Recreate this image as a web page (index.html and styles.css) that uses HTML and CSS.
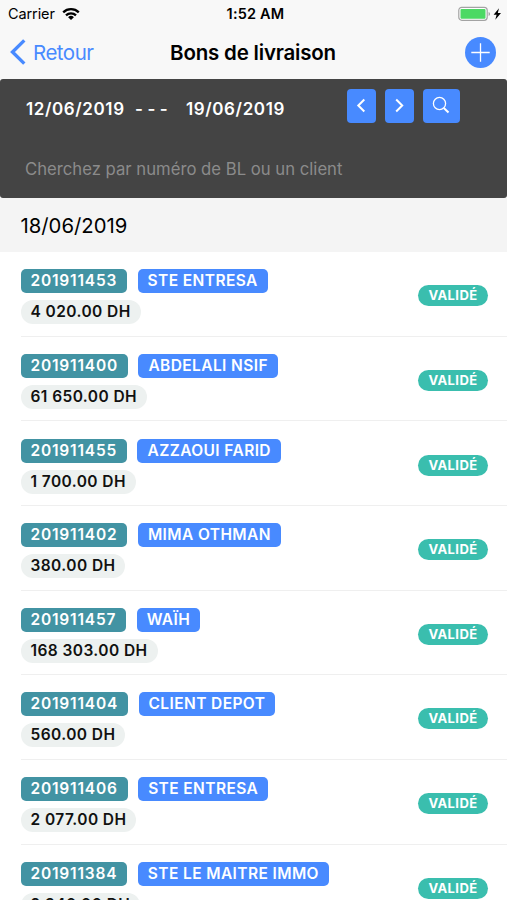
FILE: index.html
```html
<!DOCTYPE html>
<html lang="fr">
  <head>
    <meta charset="utf-8">
    <title>Bons de livraison</title>
    <link rel="stylesheet" href="styles.css">
  </head>
  <body>
    <header class="top">
      <div class="status">
        <div class="carrier">
          <span>Carrier</span>
          <svg width="18" height="14" viewBox="0 0 18 14" fill="none" stroke="#000" stroke-width="2.3">
            <path d="M1.2 5.3a11.2 11.2 0 0 1 15.6 0M4 8.3a7.2 7.2 0 0 1 10 0"/>
            <path d="M9 13L6.1 10.2a4.1 4.1 0 0 1 5.8 0z" fill="#000" stroke="none"/>
          </svg>
        </div>
        <div class="time">1:52 AM</div>
        <div class="battery">
          <svg width="45" height="16" viewBox="0 0 45 16">
            <rect x=".8" y="1.3" width="28.4" height="13" rx="3" fill="#fff" stroke="#a3a3a3" stroke-width="1.2"/>
            <rect x="2.5" y="2.9" width="25" height="9.8" rx="1" fill="#4cd964"/>
            <path d="M30.6 6v4q1.5-.6 1.5-2t-1.5-2z" fill="#a3a3a3"/>
            <path d="M41 2.3l-5.4 6.5h3l-1.3 5 5.7-6.7h-3.2z" fill="#000"/>
          </svg>
        </div>
      </div>
      <nav class="navbar">
        <a class="back">
          <svg width="16" height="26" viewBox="0 0 16 26" fill="none" stroke="#488aff" stroke-width="3.4"><path d="M14.3 1.4L2.5 13l11.8 11.6"/></svg>
          <span>Retour</span>
        </a>
        <h1>Bons de livraison</h1>
        <a class="add">
          <svg width="31" height="31" viewBox="0 0 31 31"><circle cx="15.5" cy="15.5" r="15.5" fill="#488aff"/><path d="M6.3 15.5h18.4M15.5 6.3v18.4" stroke="#fff" stroke-width="1.3"/></svg>
        </a>
      </nav>
    </header>
    <section class="filter">
      <div class="dates">
        <span class="from">12/06/2019</span>
        <span class="dash">- - -</span>
        <span class="to">19/06/2019</span>
        <button class="btn"><svg width="29" height="34" viewBox="0 0 29 34"><path d="M17.3 10.5l-6 6 6 6"/></svg></button>
        <button class="btn"><svg width="29" height="34" viewBox="0 0 29 34"><path d="M11.2 10.5l6 6-6 6"/></svg></button>
        <button class="btn wide"><svg width="37" height="34" viewBox="0 0 37 34"><circle cx="16.5" cy="14.5" r="6.1" stroke-width="1.3"/><path d="M20.8 19l4.7 4.5"/></svg></button>
      </div>
      <div class="search">Cherchez par numéro de BL ou un client</div>
    </section>
    <h2 class="day">18/06/2019</h2>
    <ul class="list">
      <li>
        <div class="info"><div class="line"><b class="num">201911453</b><b class="client">STE ENTRESA</b></div><b class="amount">4 020.00 DH</b></div>
        <b class="state">VALIDÉ</b>
      </li>
      <li>
        <div class="info"><div class="line"><b class="num">201911400</b><b class="client">ABDELALI NSIF</b></div><b class="amount">61 650.00 DH</b></div>
        <b class="state">VALIDÉ</b>
      </li>
      <li>
        <div class="info"><div class="line"><b class="num">201911455</b><b class="client">AZZAOUI FARID</b></div><b class="amount">1 700.00 DH</b></div>
        <b class="state">VALIDÉ</b>
      </li>
      <li>
        <div class="info"><div class="line"><b class="num">201911402</b><b class="client">MIMA OTHMAN</b></div><b class="amount">380.00 DH</b></div>
        <b class="state">VALIDÉ</b>
      </li>
      <li>
        <div class="info"><div class="line"><b class="num">201911457</b><b class="client">WAÏH</b></div><b class="amount">168 303.00 DH</b></div>
        <b class="state">VALIDÉ</b>
      </li>
      <li>
        <div class="info"><div class="line"><b class="num">201911404</b><b class="client">CLIENT DEPOT</b></div><b class="amount">560.00 DH</b></div>
        <b class="state">VALIDÉ</b>
      </li>
      <li>
        <div class="info"><div class="line"><b class="num">201911406</b><b class="client">STE ENTRESA</b></div><b class="amount">2 077.00 DH</b></div>
        <b class="state">VALIDÉ</b>
      </li>
      <li>
        <div class="info"><div class="line"><b class="num">201911384</b><b class="client">STE LE MAITRE IMMO</b></div><b class="amount">2 340.00 DH</b></div>
        <b class="state">VALIDÉ</b>
      </li>
    </ul>
  </body>
</html>
```
FILE: styles.css
```css
*{box-sizing:border-box}
body{margin:0;height:900px;overflow:hidden;background:#fff;color:#000;font-family:Inter,"Liberation Sans",sans-serif}
svg{display:block}
.top{height:79px;background:#f8f8f8}
.status{display:grid;grid-template-columns:1fr auto 1fr;align-items:center;height:27px;padding:0 4px 0 8px;font-size:14.5px}
.carrier{display:flex;align-items:center;gap:7px;letter-spacing:-.1px}
.time{font-weight:600;letter-spacing:.2px}
.battery{justify-self:end}
.navbar{display:grid;grid-template-columns:1fr auto 1fr;align-items:center;height:50px;padding:0 11px 0 10px}
.back{display:flex;align-items:center;gap:7px;color:#488aff;font-size:20.5px;letter-spacing:-.5px}
h1{margin:0;font-size:20.5px;font-weight:600;letter-spacing:-.2px}
.add{justify-self:end}
.filter{height:119px;padding:10px 26px 0;background:#444;border-radius:3px;color:#fff}
.dates{display:flex;align-items:center;height:34px;font-size:17px;font-weight:600}
.dates span{padding-top:5px;letter-spacing:.6px}
.from{width:109px}
.dates .dash{width:51px;letter-spacing:.1px}
.to{width:161px}
.btn{width:29px;height:34px;margin:0 9px 0 0;padding:0;border:0;border-radius:4px;background:#488aff}
.btn.wide{width:37px}
.btn svg{fill:none;stroke:#fff;stroke-width:2}
.search{margin:35px 0 0 -1px;font-size:16.7px;line-height:22px;color:#8b8b8b}
.day{height:54px;margin:0;padding-left:20.5px;background:#f4f4f4;font-size:20.3px;line-height:55px;font-weight:400}
.list{margin:0 0 0 20.5px;padding:0;list-style:none}
li{display:flex;justify-content:space-between;height:84.67px;padding:17.2px 19.5px 0 0;border-bottom:1.3px solid #efefef}
.line{display:flex;gap:10.5px;margin-bottom:7px}
b{display:block;width:max-content;height:24px;padding:0 10px;font-size:15.5px;line-height:24px;font-weight:600;color:#fff;white-space:nowrap}
.num{border-radius:5px;background:#4293a3;letter-spacing:.8px}
.client{border-radius:5px;background:#488aff;letter-spacing:.4px}
.amount{border-radius:12px;background:#edf1f0;color:#111;letter-spacing:.42px}
.state{height:21px;margin-top:16px;border-radius:11px;background:#3abeae;font-size:13px;line-height:21px;font-weight:700;letter-spacing:.4px}
```
